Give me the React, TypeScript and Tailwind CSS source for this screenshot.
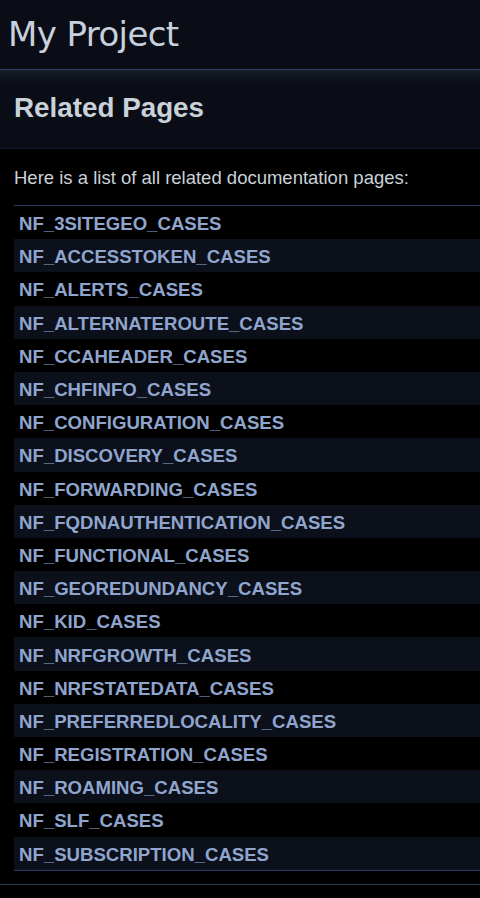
import React from "react";

const pages = [
  "NF_3SITEGEO_CASES",
  "NF_ACCESSTOKEN_CASES",
  "NF_ALERTS_CASES",
  "NF_ALTERNATEROUTE_CASES",
  "NF_CCAHEADER_CASES",
  "NF_CHFINFO_CASES",
  "NF_CONFIGURATION_CASES",
  "NF_DISCOVERY_CASES",
  "NF_FORWARDING_CASES",
  "NF_FQDNAUTHENTICATION_CASES",
  "NF_FUNCTIONAL_CASES",
  "NF_GEOREDUNDANCY_CASES",
  "NF_KID_CASES",
  "NF_NRFGROWTH_CASES",
  "NF_NRFSTATEDATA_CASES",
  "NF_PREFERREDLOCALITY_CASES",
  "NF_REGISTRATION_CASES",
  "NF_ROAMING_CASES",
  "NF_SLF_CASES",
  "NF_SUBSCRIPTION_CASES",
];

const App: React.FC = () => {
  return (
    <div className="min-h-[898px] w-[480px] overflow-hidden bg-black font-['Liberation_Sans',Arial,sans-serif]">
      {/* title area */}
      <div className="h-[70px] bg-[#0a0d16] border-b border-[#2c4268] pl-[8px] pt-[10px]">
        <div className="font-['DejaVu_Sans',Tahoma,sans-serif] text-[34px] leading-[48px] text-[#c8d0dc] tracking-[-0.6px]">
          My Project
        </div>
      </div>

      {/* header */}
      <div className="h-[79px] bg-[linear-gradient(#161c29,#0a0d16_14px)] border-b border-[#141c2e] pl-[14px] pt-[20px]">
        <h1 className="text-[27.8px] font-bold leading-[36px] text-[#c9d1d9]">
          Related Pages
        </h1>
      </div>

      {/* contents */}
      <div className="pl-[14px] pt-[18px]">
        <p className="text-[18.5px] leading-[22px] text-[#c9d1d9]">
          Here is a list of all related documentation pages:
        </p>
        <div className="mt-[16px] w-[600px] border-t border-b border-[#283a5d]">
          {pages.map((name, i) => (
            <div
              key={name}
              className={`h-[33.2px] pl-[5px] pt-[3px] flex items-center ${
                i % 2 === 1 ? "bg-[#0b101a]" : "bg-black"
              }`}
            >
              <a className="text-[18.6px] font-bold text-[#90a5ce] leading-[22px]">
                {name}
              </a>
            </div>
          ))}
        </div>
        <div className="mt-[13px] -ml-[14px] border-t border-[#283a5d]" />
      </div>
    </div>
  );
};

export default App;
